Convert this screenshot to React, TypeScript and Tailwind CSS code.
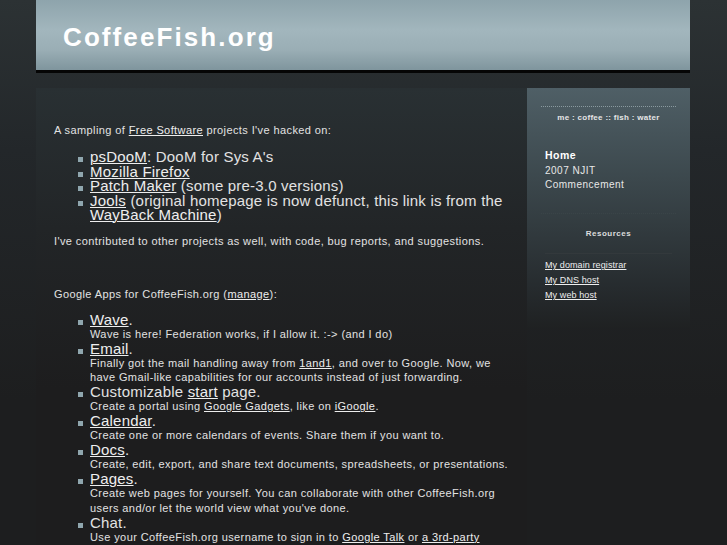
import type { ReactNode } from "react";

const FONT = { fontFamily: '"Liberation Sans", Arial, Helvetica, sans-serif' };

function L({ children }: { children: ReactNode }) {
  return (
    <a href="#" className="underline decoration-1 underline-offset-1 text-[#eeeeee]">
      {children}
    </a>
  );
}

function Bullet({ children }: { children: ReactNode }) {
  return (
    <li className="flex">
      <span className="mt-[7px] mr-[7px] h-[5px] w-[5px] shrink-0 bg-[#8fa6ae]" />
      <div>{children}</div>
    </li>
  );
}

function App({ title, desc }: { title: ReactNode; desc: ReactNode }) {
  return (
    <Bullet>
      <div className="text-[15px] leading-[14px] tracking-[0.2px]">{title}</div>
      <div className="text-[11px] leading-[14.5px] tracking-[0.4px] pb-[0.5px]">{desc}</div>
    </Bullet>
  );
}

export default function Page() {
  return (
    <div
      style={FONT}
      className="min-h-[545px] w-full overflow-hidden bg-[linear-gradient(180deg,#2c3234_0px,#23272a_150px,#1d1e1f_400px)] text-[#e2e2e2]"
    >
      <div className="w-[654px] ml-[36px]">
        <header className="h-[70px] bg-[linear-gradient(180deg,#8ea4ac_0px,#a2b6bd_30px,#9aaeb5_50px,#7f959d_70px)] shadow-[0_3px_0_#050505] flex items-center pl-[27px]">
          <h1 className="text-[26px] font-bold tracking-[2.1px] text-white pt-[4px]">CoffeeFish.org</h1>
        </header>

        <div className="mt-[18px] flex">
          <main className="w-[491px] bg-[linear-gradient(180deg,#293033_0px,#222527_140px,#1d1d1e_300px)] pl-[18px] pr-[17px] pt-[35px] pb-[20px]">
            <p className="text-[11px] leading-[14px] tracking-[0.4px]">
              A sampling of <L>Free Software</L> projects I've hacked on:
            </p>
            <ul className="mt-[13px] pl-[24px] text-[15px] leading-[14.5px] tracking-[0.2px]">
              <Bullet>
                <L>psDooM</L>: DooM for Sys A's
              </Bullet>
              <Bullet>
                <L>Mozilla Firefox</L>
              </Bullet>
              <Bullet>
                <L>Patch Maker</L> (some pre-3.0 versions)
              </Bullet>
              <Bullet>
                <L>Jools</L> (original homepage is now defunct, this link is from the <L>WayBack Machine</L>)
              </Bullet>
            </ul>
            <p className="mt-[11px] text-[11px] leading-[14px] tracking-[0.4px]">
              I've contributed to other projects as well, with code, bug reports, and suggestions.
            </p>

            <p className="mt-[39px] text-[11px] leading-[14px] tracking-[0.4px]">
              Google Apps for CoffeeFish.org (<L>manage</L>):
            </p>
            <ul className="mt-[12px] pl-[24px]">
              <App title={<><L>Wave</L>.</>} desc="Wave is here! Federation works, if I allow it. :-> (and I do)" />
              <App
                title={<><L>Email</L>.</>}
                desc={<>Finally got the mail handling away from <L>1and1</L>, and over to Google. Now, we have Gmail-like capabilities for our accounts instead of just forwarding.</>}
              />
              <App
                title={<>Customizable <L>start</L> page.</>}
                desc={<>Create a portal using <L>Google Gadgets</L>, like on <L>iGoogle</L>.</>}
              />
              <App title={<><L>Calendar</L>.</>} desc="Create one or more calendars of events. Share them if you want to." />
              <App title={<><L>Docs</L>.</>} desc="Create, edit, export, and share text documents, spreadsheets, or presentations." />
              <App
                title={<><L>Pages</L>.</>}
                desc="Create web pages for yourself. You can collaborate with other CoffeeFish.org users and/or let the world view what you've done."
              />
              <App
                title="Chat."
                desc={<>Use your CoffeeFish.org username to sign in to <L>Google Talk</L> or <L>a 3rd-party client</L> to chat with friends.</>}
              />
            </ul>
          </main>

          <aside className="w-[163px] self-start h-[240px] bg-[linear-gradient(180deg,#4f5f66_0px,#3c484d_90px,#262b2e_200px,#1f2122_240px)] px-[14px] pt-[18px]">
            <div className="border-t border-dotted border-[#8a9aa0]" />
            <p className="mt-[5px] text-center text-[8px] font-bold tracking-[0.3px] text-[#e6e6e6]">
              me : coffee :: fish : water
            </p>
            <div className="mt-[24px] pl-[4px] tracking-[0.5px]">
              <p className="text-[10.5px] font-bold leading-[14px] text-white">Home</p>
              <p className="mt-[2px] text-[10px] leading-[14px] text-[#e8e8e8]">
                2007 NJIT
                <br />
                Commencement
              </p>
            </div>
            <div className="mt-[21px] border-t border-dotted border-[#3a4448]" />
            <p className="mt-[14px] text-center text-[8px] font-bold tracking-[0.5px] text-[#dddddd]">Resources</p>
            <div className="mt-[13px] mx-[4px] border-t border-[#33393c]" />
            <div className="mt-[6px] pl-[4px] flex flex-col gap-[4px] text-[9px] leading-[11px] tracking-[0.1px]">
              <L>My domain registrar</L>
              <L>My DNS host</L>
              <L>My web host</L>
            </div>
          </aside>
        </div>
      </div>
    </div>
  );
}
